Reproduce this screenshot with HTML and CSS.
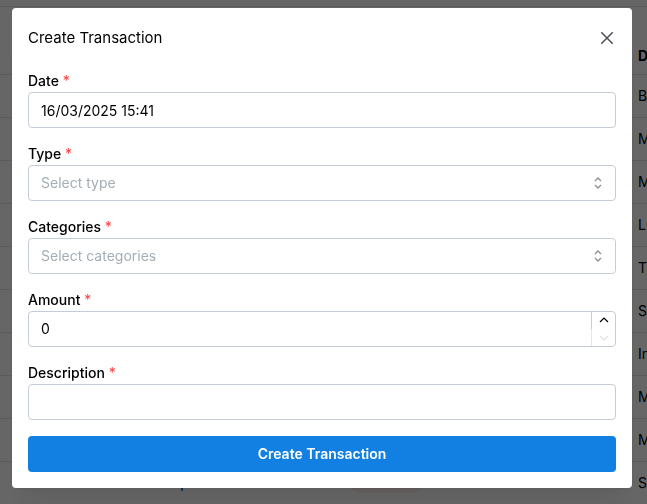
FILE: index.html
```html
<!DOCTYPE html>
<html lang="en">
<head>
<meta charset="utf-8">
<meta name="viewport" content="width=device-width, initial-scale=1">
<title>Create Transaction</title>
<link rel="stylesheet" href="styles.css">
</head>
<body>
<main class="page">
  <table class="transactions">
    <colgroup><col class="col-date"><col class="col-category"><col class="col-amount"><col class="col-account"><col></colgroup>
    <thead><tr><th></th><th></th><th></th><th></th><th>Description</th></tr></thead>
    <tbody>
      <tr><td></td><td></td><td></td><td></td><td>Bus</td></tr>
      <tr><td></td><td></td><td></td><td></td><td>Market</td></tr>
      <tr><td></td><td></td><td></td><td></td><td>Market</td></tr>
      <tr><td></td><td></td><td></td><td></td><td>Lunch</td></tr>
      <tr><td></td><td></td><td></td><td></td><td>Train</td></tr>
      <tr><td></td><td></td><td></td><td></td><td>Salary</td></tr>
      <tr><td></td><td></td><td></td><td></td><td>Internet</td></tr>
      <tr><td></td><td></td><td></td><td></td><td>Market</td></tr>
      <tr><td></td><td></td><td></td><td></td><td>Market</td></tr>
      <tr><td></td><td>Online purchase</td><td><span class="pill"></span></td><td></td><td>Salary</td></tr>
    </tbody>
  </table>
</main>
<div class="overlay">
  <section class="modal" role="dialog" aria-modal="true" aria-labelledby="modal-title">
    <header class="modal-header">
      <h2 class="modal-title" id="modal-title">Create Transaction</h2>
      <button class="close" type="button" aria-label="Close">
        <svg width="22" height="22" viewBox="0 0 22 22" fill="none" stroke="currentColor" stroke-width="1.5"><path d="M5.3 5.3l11.4 11.4M16.7 5.3L5.3 16.7"/></svg>
      </button>
    </header>
    <form class="form">
      <div class="field">
        <label class="label" for="date">Date <span class="required">*</span></label>
        <input class="control" id="date" type="text" value="16/03/2025 15:41">
      </div>
      <div class="field">
        <label class="label" for="type">Type <span class="required">*</span></label>
        <div class="select-wrap">
          <select class="control placeholder" id="type"><option>Select type</option></select>
          <svg class="selector" width="16" height="16" viewBox="0 0 16 16" fill="none" stroke="currentColor" stroke-width="1.3"><path d="M5 6l3-3 3 3M5 10l3 3 3-3"/></svg>
        </div>
      </div>
      <div class="field">
        <label class="label" for="categories">Categories <span class="required">*</span></label>
        <div class="select-wrap">
          <select class="control placeholder" id="categories"><option>Select categories</option></select>
          <svg class="selector" width="16" height="16" viewBox="0 0 16 16" fill="none" stroke="currentColor" stroke-width="1.3"><path d="M5 6l3-3 3 3M5 10l3 3 3-3"/></svg>
        </div>
      </div>
      <div class="field">
        <label class="label" for="amount">Amount <span class="required">*</span></label>
        <div class="control number">
          <input class="number-input" id="amount" type="text" inputmode="decimal" value="0">
          <div class="steppers">
            <button class="step" type="button" aria-label="Increase"><svg width="10" height="8" viewBox="0 0 10 8" fill="none" stroke="currentColor" stroke-width="1.2"><path d="M1 5l4-4 4 4"/></svg></button>
            <button class="step" type="button" aria-label="Decrease" disabled><svg width="10" height="8" viewBox="0 0 10 8" fill="none" stroke="currentColor" stroke-width="1.2"><path d="M1 2l4 4 4-4"/></svg></button>
          </div>
        </div>
      </div>
      <div class="field">
        <label class="label" for="description">Description <span class="required">*</span></label>
        <input class="control" id="description" type="text">
      </div>
      <button class="submit" type="submit">Create Transaction</button>
    </form>
  </section>
</div>
</body>
</html>
```
FILE: styles.css
```css
* { box-sizing: border-box; }

body {
  margin: 0;
  overflow: hidden;
  background: #fff;
  color: #000;
  font: 14px/20px Inter, "Liberation Sans", sans-serif;
}

button, input, select { font: inherit; color: inherit; }

.page {
  height: 100vh;
  padding-top: 6px;
  overflow: hidden;
}

.transactions {
  width: 800px;
  table-layout: fixed;
  border-collapse: collapse;
  border-top: 1px solid #dee2e6;
}

.col-date { width: 124px; }
.col-category { width: 216px; }
.col-amount { width: 170px; }
.col-account { width: 118px; }

.transactions th,
.transactions td {
  height: 43px;
  padding: 0 10px;
  border-bottom: 1px solid #dee2e6;
  text-align: left;
  white-space: nowrap;
}

.transactions th {
  height: 68px;
  padding-top: 30px;
  font-weight: 700;
}

.pill {
  display: block;
  width: 74px;
  height: 20px;
  border-radius: 10px;
  background: #fff0f0;
}

.overlay {
  position: fixed;
  inset: 0;
  padding: 8px 15px 16px 12px;
  background: rgba(0, 0, 0, 0.6);
}

.modal {
  padding: 16px;
  border-radius: 4px;
  background: #fff;
  box-shadow: 0 1px 3px rgba(0, 0, 0, 0.05), 0 28px 23px -7px rgba(0, 0, 0, 0.05), 0 12px 12px -7px rgba(0, 0, 0, 0.04);
}

.modal-header {
  display: flex;
  align-items: center;
  justify-content: space-between;
  height: 28px;
  margin-bottom: 19px;
}

.modal-title {
  margin: 0;
  font-size: 15px;
  font-weight: 400;
}

.close {
  display: flex;
  align-items: center;
  justify-content: center;
  width: 28px;
  height: 28px;
  margin-right: -5px;
  padding: 0;
  border: 0;
  background: transparent;
  color: #495057;
}

.form {
  display: flex;
  flex-direction: column;
  gap: 16px;
}

.label {
  display: block;
  height: 21px;
  font-weight: 500;
}

.required {
  color: #fa3e3e;
  font-weight: 400;
}

.control {
  display: block;
  width: 100%;
  height: 36px;
  padding: 0 12px;
  border: 1px solid #c6ccd6;
  border-radius: 4px;
  background: #fff;
}

.select-wrap { position: relative; }

select.control { appearance: none; }

select.placeholder { color: #a5adb5; }

.selector {
  position: absolute;
  top: 10px;
  right: 10px;
  color: #868e96;
  pointer-events: none;
}

.number {
  display: flex;
  padding-right: 0;
}

.number-input {
  flex: 1;
  min-width: 0;
  padding: 0;
  border: 0;
  background: transparent;
}

.steppers {
  display: flex;
  flex-direction: column;
  width: 24px;
}

.step {
  display: flex;
  flex: 1;
  align-items: center;
  justify-content: center;
  padding: 0;
  border: 0;
  border-left: 1px solid #c6ccd6;
  background: transparent;
}

.step:disabled {
  border-color: #e3e6ea;
  color: #dee2e6;
}

.submit {
  height: 36px;
  padding: 0 18px;
  border: 0;
  border-radius: 4px;
  background: #1280e3;
  color: #fff;
  font-weight: 600;
}
```
